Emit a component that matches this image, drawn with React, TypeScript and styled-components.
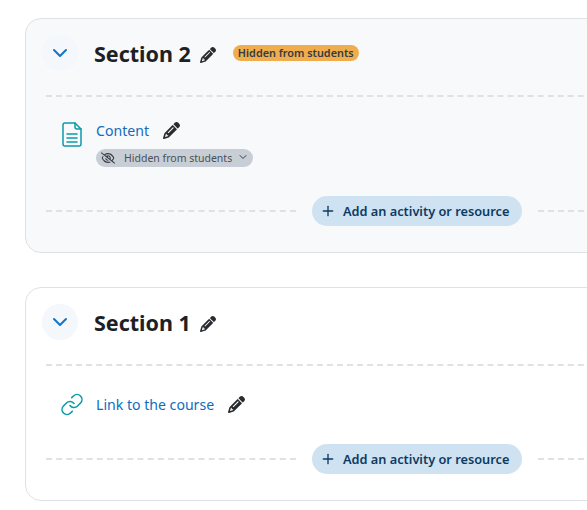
import React from "react";
import styled, { createGlobalStyle } from "styled-components";
import { FaPencil, FaRegEyeSlash } from "react-icons/fa6";
import { Link as LinkIcon, Plus, ChevronDown } from "lucide-react";

const Global = createGlobalStyle`
  html, body { margin: 0; padding: 0; background: #fff; overflow: hidden; }
  body { font-family: "Noto Sans", "Open Sans", "Liberation Sans", sans-serif; }
`;

const Page = styled.div`
  width: 587px;
  height: 510px;
  overflow: hidden;
  padding: 18px 0 0 25px;
  box-sizing: border-box;
  display: flex;
  flex-direction: column;
  gap: 34px;
`;

const Card = styled.section<{ $muted?: boolean }>`
  width: 640px;
  box-sizing: border-box;
  flex: none;
  border: 1px solid #dee2e6;
  border-radius: 16px;
  background: ${(p) => (p.$muted ? "#f8f9fa" : "#fff")};
  padding: 16px 20px 26px 16px;
`;

const Header = styled.header`
  display: flex;
  align-items: center;
  height: 36px;
`;

const Toggle = styled.span`
  width: 36px;
  height: 36px;
  border-radius: 50%;
  background: #f4f7fb;
  color: #1474c8;
  display: flex;
  align-items: center;
  justify-content: center;
  flex: none;
`;

const Title = styled.h3`
  margin: 2px 0 0 16px;
  font-size: 21.5px;
  line-height: 28px;
  font-weight: 700;
  color: #1d2125;
`;

const Pencil = styled(FaPencil)<{ $size: number; $gap: number; $lift: number }>`
  font-size: ${(p) => p.$size}px;
  margin-left: ${(p) => p.$gap}px;
  margin-top: ${(p) => p.$lift}px;
  color: #282c30;
  flex: none;
`;

const Badge = styled.span`
  margin-left: 17px;
  background: #f0ad4e;
  color: #343a40;
  font-size: 10.85px;
  font-weight: 600;
  line-height: 16px;
  height: 16px;
  padding: 0 5px;
  border-radius: 8px;
  white-space: nowrap;
`;

const Rule = styled.hr`
  border: 0;
  border-top: 2px dashed #dee2e6;
  margin: 24px 0 0 4px;
`;

const Activity = styled.div<{ $tall?: boolean }>`
  display: flex;
  margin: ${(p) => (p.$tall ? "22px" : "27px")} 0 0 18px;
  gap: 12px;
`;

const ActivityIcon = styled.span<{ $drop?: number }>`
  width: 24px;
  height: 24px;
  margin-top: ${(p) => p.$drop ?? 0}px;
  color: #0b9bab;
  display: flex;
  align-items: center;
  justify-content: center;
  flex: none;
`;

const Body = styled.div`
  display: flex;
  flex-direction: column;
`;

const NameRow = styled.div`
  display: flex;
  align-items: center;
  height: 24px;
`;

const Name = styled.a`
  color: #0f6cbf;
  font-size: 14.1px;
  line-height: 24px;
  text-decoration: none;
`;

const Visibility = styled.span`
  display: inline-flex;
  align-items: center;
  align-self: flex-start;
  height: 18px;
  margin-top: 6px;
  padding: 0 5px;
  background: #c8ced6;
  border-radius: 9px;
  color: #495057;
  font-size: 10.5px;
  white-space: nowrap;
`;

const EyeSlash = styled(FaRegEyeSlash)`
  font-size: 14px;
  color: #343a40;
  margin-right: 9px;
`;

const Caret = styled(ChevronDown)`
  width: 12px;
  height: 12px;
  margin: -2px 0 0 5px;
  margin-right: -1px;
  color: #343a40;
`;

const AddRow = styled.div`
  display: flex;
  align-items: center;
  gap: 16px;
  margin: 29px 0 0 4px;
`;

const AddRowCompact = styled(AddRow)`
  margin-top: 27px;
`;

const Dash = styled.span`
  flex: 1;
  border-top: 2px dashed #dee2e6;
`;

const AddLeft = styled(Dash)`
  flex: none;
  width: 250px;
`;

const AddButton = styled.button`
  display: flex;
  align-items: center;
  gap: 7px;
  width: 210px;
  height: 30px;
  box-sizing: border-box;
  flex: none;
  padding: 0 0 0 8px;
  border: 0;
  border-radius: 15px;
  background: #cfe2f1;
  color: #0c3a62;
  font-family: inherit;
  font-size: 12.75px;
  font-weight: 600;
  white-space: nowrap;
`;

const DocIcon = () => (
  <svg width="20" height="25" viewBox="0 0 20 25" fill="none" stroke="currentColor" strokeWidth="1.5" strokeLinejoin="round" strokeLinecap="round">
    <path d="M3 1h10l6 6v15a2 2 0 0 1-2 2H3a2 2 0 0 1-2-2V3a2 2 0 0 1 2-2z" />
    <path d="M13 1v4a2 2 0 0 0 2 2h4" />
    <path d="M5 12h10M5 16h10M5 20h10" />
  </svg>
);

const Controls = ({ compact }: { compact?: boolean }) => {
  const Row = compact ? AddRowCompact : AddRow;
  return (
    <Row>
      <AddLeft />
      <AddButton>
        <Plus size={16} strokeWidth={2} />
        Add an activity or resource
      </AddButton>
      <Dash />
    </Row>
  );
};

export default function App() {
  return (
    <>
      <Global />
      <Page>
        <Card $muted>
          <Header>
            <Toggle><ChevronDown size={24} strokeWidth={2} /></Toggle>
            <Title>Section 2</Title>
            <Pencil $size={16} $gap={9} $lift={4} />
            <Badge>Hidden from students</Badge>
          </Header>
          <Rule />
          <Activity $tall>
            <ActivityIcon $drop={3}><DocIcon /></ActivityIcon>
            <Body>
              <NameRow>
                <Name>Content</Name>
                <Pencil $size={17} $gap={14} $lift={-2} />
              </NameRow>
              <Visibility>
                <EyeSlash />
                Hidden from students
                <Caret />
              </Visibility>
            </Body>
          </Activity>
          <Controls />
        </Card>
        <Card>
          <Header>
            <Toggle><ChevronDown size={24} strokeWidth={2} /></Toggle>
            <Title>Section 1</Title>
            <Pencil $size={16} $gap={9} $lift={4} />
          </Header>
          <Rule />
          <Activity>
            <ActivityIcon $drop={-1}><LinkIcon size={25} strokeWidth={1.6} /></ActivityIcon>
            <Body>
              <NameRow>
                <Name>Link to the course</Name>
                <Pencil $size={17} $gap={14} $lift={-2} />
              </NameRow>
            </Body>
          </Activity>
          <Controls compact />
        </Card>
      </Page>
    </>
  );
}
